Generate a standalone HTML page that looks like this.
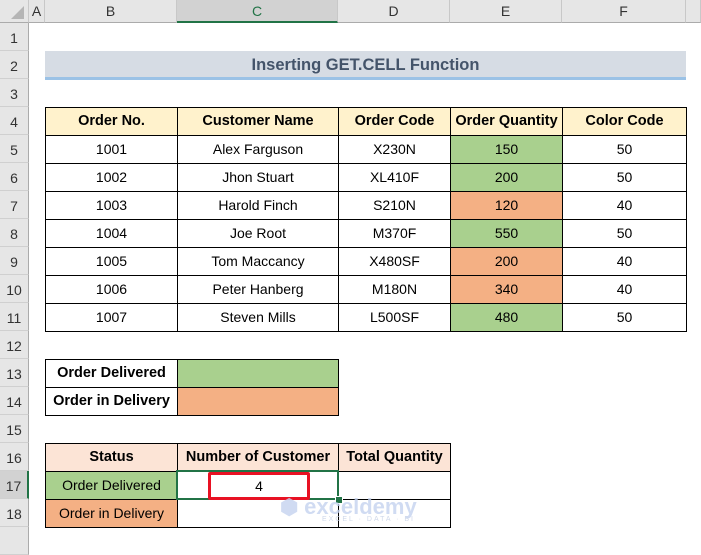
<!DOCTYPE html>
<html><head><meta charset="utf-8"><style>
body{margin:0;width:701px;height:541px;overflow:hidden;background:#fff;font-family:"Liberation Sans",Arial,sans-serif;position:relative}
.ch{position:absolute;top:0;height:23px;border-right:1px solid #c8c8c8;border-bottom:1px solid #ababab;background:#e6e6e6;text-align:center;line-height:23px;font-size:14px;color:#333;box-sizing:border-box}
.rh{position:absolute;left:0;width:29px;height:28px;border-bottom:1px solid #d0d0d0;border-right:1px solid #ababab;background:#e6e6e6;text-align:center;line-height:30px;font-size:14px;color:#333;box-sizing:border-box}
table{position:absolute;border-collapse:collapse;font-size:14px;table-layout:fixed}
td{border:1px solid #000;height:27px;padding:0;text-align:center;overflow:hidden;white-space:nowrap;line-height:27px}
.h{background:#fff2cc;font-weight:bold;font-size:14.5px}
.g{background:#a9d08e}.o{background:#f4b084}.p{background:#fce4d6;font-weight:bold;font-size:14.5px}
</style></head><body>
<div class="ch" style="left:0;width:29px"><svg width="29" height="22"><polygon points="24,6 24,19 11,19" fill="#b5b5b5"/></svg></div>
<div class="ch" style="left:29px;width:16px">A</div>
<div class="ch" style="left:45px;width:132px">B</div>
<div class="ch" style="left:177px;width:161px;background:#d2d2d2;border-bottom:2px solid #217346;color:#217346">C</div>
<div class="ch" style="left:338px;width:112px">D</div>
<div class="ch" style="left:450px;width:112px">E</div>
<div class="ch" style="left:562px;width:124px">F</div>
<div class="ch" style="left:686px;width:15px"></div>
<div class="rh" style="top:23px">1</div><div class="rh" style="top:51px">2</div><div class="rh" style="top:79px">3</div><div class="rh" style="top:107px">4</div><div class="rh" style="top:135px">5</div><div class="rh" style="top:163px">6</div><div class="rh" style="top:191px">7</div><div class="rh" style="top:219px">8</div><div class="rh" style="top:247px">9</div><div class="rh" style="top:275px">10</div><div class="rh" style="top:303px">11</div><div class="rh" style="top:331px">12</div><div class="rh" style="top:359px">13</div><div class="rh" style="top:387px">14</div><div class="rh" style="top:415px">15</div><div class="rh" style="top:443px">16</div><div class="rh" style="top:471px;background:#d2d2d2;border-right:2px solid #217346">17</div><div class="rh" style="top:499px">18</div><div class="rh" style="top:527px"></div>
<div style="position:absolute;left:45px;top:51px;width:641px;height:26px;background:#d6dce4;border-bottom:3px solid #9bc2e6;text-align:center;line-height:29px;font-weight:bold;font-size:16.5px;color:#44546a">Inserting GET.CELL Function</div>
<table style="left:45px;top:107px;width:642px">
<colgroup><col style="width:132px"><col style="width:161px"><col style="width:112px"><col style="width:112px"><col style="width:124px"></colgroup>
<tr><td class="h">Order No.</td><td class="h">Customer Name</td><td class="h">Order Code</td><td class="h">Order Quantity</td><td class="h">Color Code</td></tr>
<tr><td>1001</td><td>Alex Farguson</td><td>X230N</td><td class="g">150</td><td>50</td></tr>
<tr><td>1002</td><td>Jhon Stuart</td><td>XL410F</td><td class="g">200</td><td>50</td></tr>
<tr><td>1003</td><td>Harold Finch</td><td>S210N</td><td class="o">120</td><td>40</td></tr>
<tr><td>1004</td><td>Joe Root</td><td>M370F</td><td class="g">550</td><td>50</td></tr>
<tr><td>1005</td><td>Tom Maccancy</td><td>X480SF</td><td class="o">200</td><td>40</td></tr>
<tr><td>1006</td><td>Peter Hanberg</td><td>M180N</td><td class="o">340</td><td>40</td></tr>
<tr><td>1007</td><td>Steven Mills</td><td>L500SF</td><td class="g">480</td><td>50</td></tr>
</table>
<table style="left:45px;top:359px;width:294px">
<colgroup><col style="width:132px"><col style="width:161px"></colgroup>
<tr><td style="font-weight:bold;font-size:14.5px">Order Delivered</td><td class="g"></td></tr>
<tr><td style="font-weight:bold;font-size:14.5px">Order in Delivery</td><td class="o"></td></tr>
</table>
<table style="left:45px;top:443px;width:406px">
<colgroup><col style="width:132px"><col style="width:161px"><col style="width:112px"></colgroup>
<tr><td class="p">Status</td><td class="p">Number of Customer</td><td class="p">Total Quantity</td></tr>
<tr><td class="g">Order Delivered</td><td></td><td></td></tr>
<tr><td class="o">Order in Delivery</td><td></td><td></td></tr>
</table>
<div style="position:absolute;left:176px;top:470px;width:163px;height:30px;border:2px solid #217346;box-sizing:border-box"></div>
<div style="position:absolute;left:335px;top:496px;width:6px;height:6px;background:#217346;border:1px solid #fff"></div>
<div style="position:absolute;left:208px;top:472px;width:102px;height:28px;border:3px solid #e81123;border-radius:2px;box-sizing:border-box;background:#fff;text-align:center;line-height:22px;font-size:14px">4</div>
<div style="position:absolute;left:280px;top:494px;color:#c5d3ef;font-weight:bold;font-size:21px;opacity:.8">⬢ <span style="font-size:22px">exceldemy</span></div>
<div style="position:absolute;left:322px;top:516px;color:#cfd8ea;font-size:7px;letter-spacing:2px">EXCEL · DATA · BI</div>
</body></html>
